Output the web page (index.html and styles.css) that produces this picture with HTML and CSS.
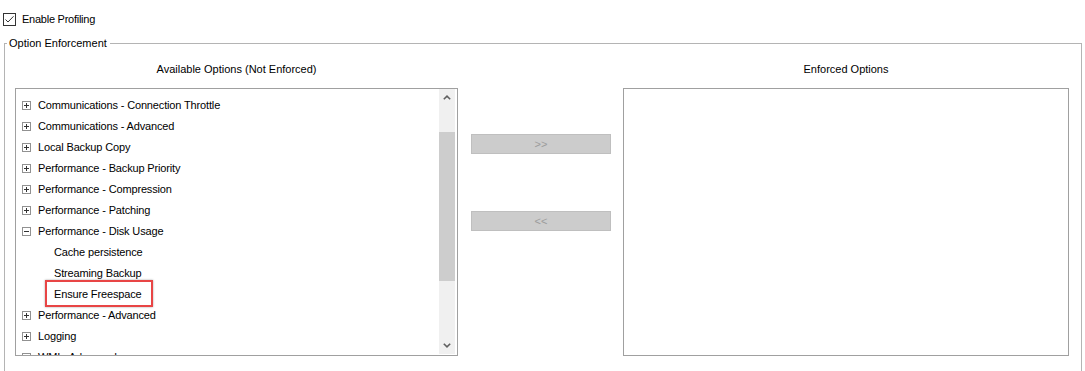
FILE: index.html
```html
<!DOCTYPE html>
<html lang="en">
<head>
<meta charset="utf-8">
<title>Option Enforcement</title>
<link rel="stylesheet" href="styles.css">
</head>
<body>
<div class="page">
  <label class="check-row">
    <span class="checkbox">
      <svg width="13" height="13" viewBox="0 0 13 13"><rect x="0.5" y="0.5" width="12" height="12" fill="#fff" stroke="#333"/><path d="M2.5 6.5 L5 9 L10.5 3.3" fill="none" stroke="#333" stroke-width="1"/></svg>
    </span>
    <span class="check-label">Enable Profiling</span>
  </label>

  <fieldset class="group">
    <legend class="group-title">Option Enforcement</legend>
    <div class="columns">
      <div class="col-head">Available Options (Not Enforced)</div>
      <div class="col-head"></div>
      <div class="col-head">Enforced Options</div>

      <div class="listbox">
        <div class="tree">
          <div class="row"><svg class="expander" width="9" height="9" viewBox="0 0 9 9"><rect x="0.5" y="0.5" width="8" height="8" fill="#fff" stroke="#919191"/><path d="M2 4.5 H7 M4.5 2 V7" stroke="#333"/></svg><span>Communications - Connection Throttle</span></div>
          <div class="row"><svg class="expander" width="9" height="9" viewBox="0 0 9 9"><rect x="0.5" y="0.5" width="8" height="8" fill="#fff" stroke="#919191"/><path d="M2 4.5 H7 M4.5 2 V7" stroke="#333"/></svg><span>Communications - Advanced</span></div>
          <div class="row"><svg class="expander" width="9" height="9" viewBox="0 0 9 9"><rect x="0.5" y="0.5" width="8" height="8" fill="#fff" stroke="#919191"/><path d="M2 4.5 H7 M4.5 2 V7" stroke="#333"/></svg><span>Local Backup Copy</span></div>
          <div class="row"><svg class="expander" width="9" height="9" viewBox="0 0 9 9"><rect x="0.5" y="0.5" width="8" height="8" fill="#fff" stroke="#919191"/><path d="M2 4.5 H7 M4.5 2 V7" stroke="#333"/></svg><span>Performance - Backup Priority</span></div>
          <div class="row"><svg class="expander" width="9" height="9" viewBox="0 0 9 9"><rect x="0.5" y="0.5" width="8" height="8" fill="#fff" stroke="#919191"/><path d="M2 4.5 H7 M4.5 2 V7" stroke="#333"/></svg><span>Performance - Compression</span></div>
          <div class="row"><svg class="expander" width="9" height="9" viewBox="0 0 9 9"><rect x="0.5" y="0.5" width="8" height="8" fill="#fff" stroke="#919191"/><path d="M2 4.5 H7 M4.5 2 V7" stroke="#333"/></svg><span>Performance - Patching</span></div>
          <div class="row"><svg class="expander" width="9" height="9" viewBox="0 0 9 9"><rect x="0.5" y="0.5" width="8" height="8" fill="#fff" stroke="#919191"/><path d="M2 4.5 H7" stroke="#333"/></svg><span>Performance - Disk Usage</span></div>
          <div class="row child"><span>Cache persistence</span></div>
          <div class="row child"><span>Streaming Backup</span></div>
          <div class="row child"><span class="highlighted">Ensure Freespace</span></div>
          <div class="row"><svg class="expander" width="9" height="9" viewBox="0 0 9 9"><rect x="0.5" y="0.5" width="8" height="8" fill="#fff" stroke="#919191"/><path d="M2 4.5 H7 M4.5 2 V7" stroke="#333"/></svg><span>Performance - Advanced</span></div>
          <div class="row"><svg class="expander" width="9" height="9" viewBox="0 0 9 9"><rect x="0.5" y="0.5" width="8" height="8" fill="#fff" stroke="#919191"/><path d="M2 4.5 H7 M4.5 2 V7" stroke="#333"/></svg><span>Logging</span></div>
          <div class="row"><svg class="expander" width="9" height="9" viewBox="0 0 9 9"><rect x="0.5" y="0.5" width="8" height="8" fill="#fff" stroke="#919191"/><path d="M2 4.5 H7 M4.5 2 V7" stroke="#333"/></svg><span>WMI - Advanced</span></div>
        </div>
        <div class="scrollbar">
          <div class="arrow"><svg width="8" height="5" viewBox="0 0 8 5"><path d="M0.8 4.3 L4 1.2 L7.2 4.3" fill="none" stroke="#606060" stroke-width="1.6"/></svg></div>
          <div class="track"><div class="thumb"></div></div>
          <div class="arrow"><svg width="8" height="5" viewBox="0 0 8 5"><path d="M0.8 0.7 L4 3.8 L7.2 0.7" fill="none" stroke="#606060" stroke-width="1.6"/></svg></div>
        </div>
      </div>

      <div class="mover">
        <button class="move-btn" type="button" disabled>&gt;&gt;</button>
        <button class="move-btn" type="button" disabled>&lt;&lt;</button>
      </div>

      <div class="listbox"></div>
    </div>
  </fieldset>
</div>
</body>
</html>
```

FILE: styles.css
```css
html, body {
  margin: 0;
  padding: 0;
  overflow: hidden;
  background: #fff;
}

body {
  font-family: "Liberation Sans", Arial, sans-serif;
  font-size: 11px;
  color: #000;
}

.page {
  padding: 13px 3px 0 3px;
}

.check-row {
  display: flex;
  align-items: center;
  height: 13px;
  gap: 6px;
}

.checkbox {
  display: block;
  width: 13px;
  height: 13px;
}

.checkbox svg {
  display: block;
}

.check-label {
  line-height: 13px;
  letter-spacing: -0.25px;
}

.group {
  margin: 10px 0 0 1px;
  padding: 12px 12px 20px 10px;
  border: 1px solid #b4b4b4;
  min-width: 0;
}

.group-title {
  padding: 0 3px 0 2px;
  margin-left: -8px;
  line-height: 14px;
}

.columns {
  display: grid;
  grid-template-columns: 443px 165px 446px;
  grid-template-rows: 14px 268px;
  row-gap: 12px;
}

.col-head {
  text-align: center;
  line-height: 14px;
}

.listbox {
  border: 1px solid #a0a0a0;
  display: flex;
  overflow: hidden;
  background: #fff;
}

.tree {
  flex: 1;
  overflow: hidden;
  padding-top: 6px;
}

.row {
  display: flex;
  align-items: center;
  height: 21px;
  padding-left: 6px;
  gap: 7px;
  white-space: nowrap;
  letter-spacing: -0.15px;
}

.row span {
  line-height: 21px;
}

.row.child {
  padding-left: 38px;
}

.expander {
  display: block;
  flex: none;
}

.highlighted {
  position: relative;
}

.highlighted::after {
  content: "";
  position: absolute;
  left: -9px;
  right: -12px;
  top: -4px;
  bottom: -2px;
  border: 2px solid #e84545;
  box-shadow: 0 0 2px rgba(0, 0, 0, 0.35);
}

.scrollbar {
  width: 16px;
  margin: 0 2px 1px 0;
  background: #f0f0f0;
  display: flex;
  flex-direction: column;
}

.arrow {
  height: 17px;
  display: flex;
  align-items: center;
  justify-content: center;
}

.arrow svg {
  display: block;
}

.track {
  flex: 1;
  padding-top: 26px;
}

.thumb {
  height: 149px;
  background: #cdcdcd;
}

.mover {
  display: flex;
  flex-direction: column;
  gap: 57px;
  padding: 46px 0 0 13px;
}

.move-btn {
  width: 140px;
  height: 20px;
  margin: 0;
  padding: 0;
  background: #cccccc;
  border: 1px solid #bfbfbf;
  color: #9c9c9c;
  font-family: "Liberation Sans", Arial, sans-serif;
  font-size: 11px;
  line-height: 18px;
}
```
